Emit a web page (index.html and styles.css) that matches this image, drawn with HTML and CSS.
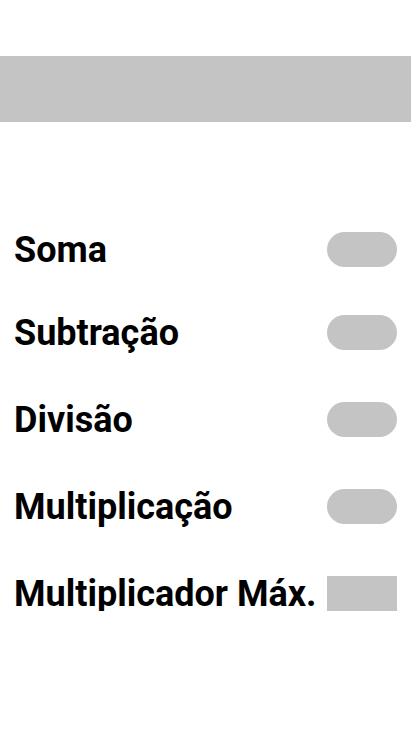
FILE: index.html
```html
<!DOCTYPE html>
<html lang="pt">
<head>
<meta charset="utf-8">
<link rel="stylesheet" href="styles.css">
</head>
<body>
<div class="app">
  <div class="topbar"></div>
  <div class="settings">
    <div class="row first"><span class="label">Soma</span><span class="toggle"></span></div>
    <div class="row"><span class="label">Subtração</span><span class="toggle"></span></div>
    <div class="row wide"><span class="label">Divisão</span><span class="toggle"></span></div>
    <div class="row wide"><span class="label">Multiplicação</span><span class="toggle"></span></div>
    <div class="row wide"><span class="label">Multiplicador Máx.</span><span class="field"></span></div>
  </div>
</div>
</body>
</html>
```
FILE: styles.css
```css
html, body {
  margin: 0;
  padding: 0;
  background: #ffffff;
}
.app {
  font-family: Roboto, "Liberation Sans", sans-serif;
  padding-top: 56px;
}
.topbar {
  height: 66px;
  background: #c4c4c4;
}
.settings {
  display: flex;
  flex-direction: column;
  padding: 0 14px;
}
.row {
  display: flex;
  align-items: center;
  justify-content: space-between;
  height: 35px;
  margin-top: 52px;
}
.row.first {
  margin-top: 110px;
}
.row:nth-child(2) {
  margin-top: 48px;
}
.label {
  font-size: 36px;
  font-weight: 700;
  color: #000;
  line-height: 35px;
  padding-top: 2px;
  white-space: nowrap;
}
.toggle {
  width: 70px;
  height: 35px;
  border-radius: 18px;
  background: #c4c4c4;
  flex: none;
}
.field {
  width: 70px;
  height: 35px;
  background: #c4c4c4;
  flex: none;
}
```
